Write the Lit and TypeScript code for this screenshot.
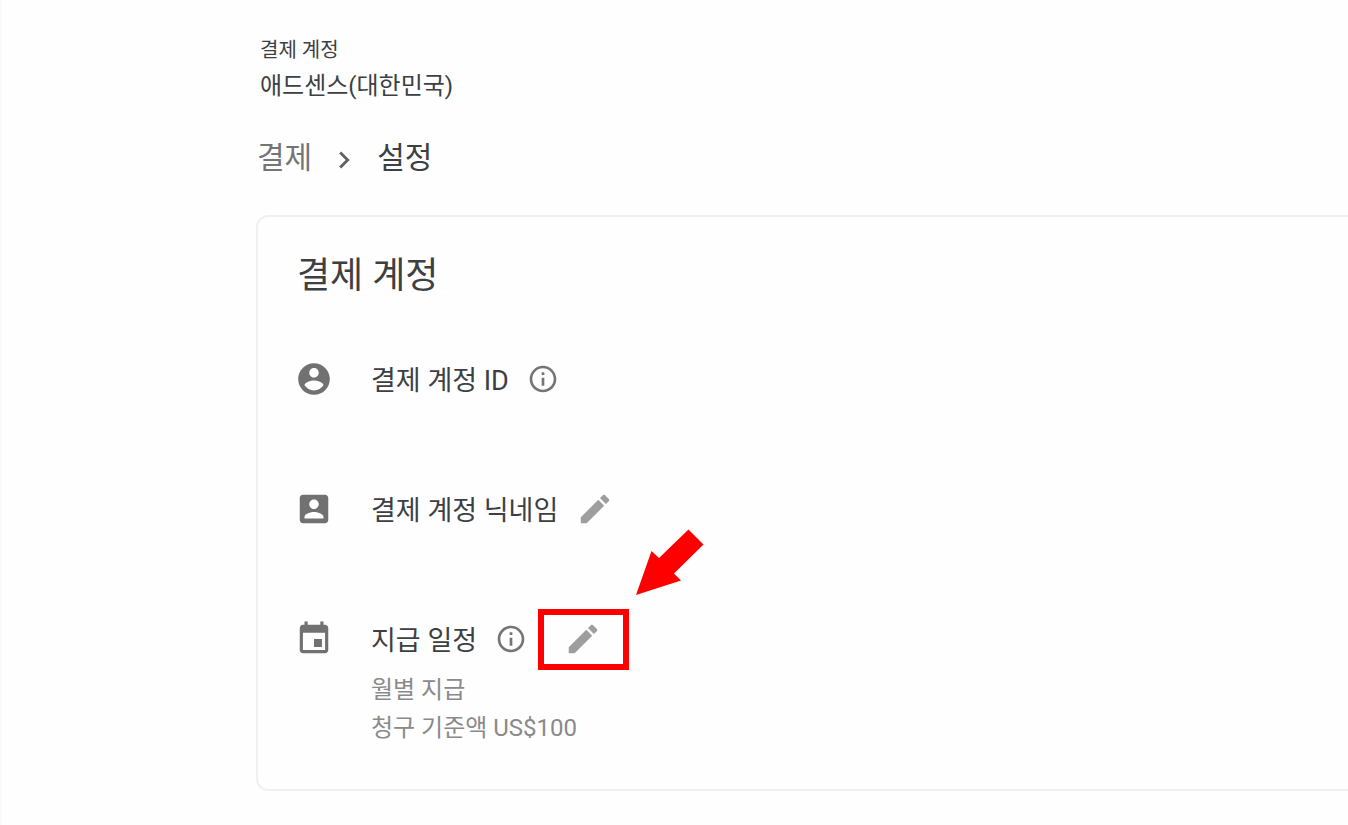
import { LitElement, html, css, svg } from "lit";
import { customElement } from "lit/decorators.js";

const PATHS = {
  accountCircle:
    "M12 2C6.48 2 2 6.48 2 12s4.48 10 10 10 10-4.48 10-10S17.52 2 12 2zm0 3c1.66 0 3 1.34 3 3s-1.34 3-3 3-3-1.34-3-3 1.34-3 3-3zm0 14.2c-2.5 0-4.71-1.28-6-3.22.03-1.99 4-3.08 6-3.08 1.99 0 5.97 1.09 6 3.08-1.29 1.94-3.5 3.22-6 3.22z",
  accountBox:
    "M3 5v14c0 1.1.89 2 2 2h14c1.1 0 2-.9 2-2V5c0-1.1-.9-2-2-2H5c-1.11 0-2 .9-2 2zm12 4c0 1.66-1.34 3-3 3s-3-1.34-3-3 1.34-3 3-3 3 1.34 3 3zm-9 8c0-2 4-3.1 6-3.1s6 1.1 6 3.1v1H6v-1z",
  event:
    "M17 12h-5v5h5v-5zM16 1v2H8V1H6v2H5c-1.11 0-1.99.9-1.99 2L3 19c0 1.1.89 2 2 2h14c1.1 0 2-.9 2-2V5c0-1.1-.9-2-2-2h-1V1h-2zm3 18H5V8h14v11z",
  info:
    "M11 7h2v2h-2zm0 4h2v6h-2zm1-9C6.48 2 2 6.48 2 12s4.48 10 10 10 10-4.48 10-10S17.52 2 12 2zm0 18c-4.41 0-8-3.59-8-8s3.59-8 8-8 8 3.59 8 8-3.59 8-8 8z",
  edit:
    "M3 17.25V21h3.75L17.81 9.94l-3.75-3.75L3 17.25zM20.71 7.04c.39-.39.39-1.02 0-1.41l-2.34-2.34c-.39-.39-1.02-.39-1.41 0l-1.83 1.83 3.75 3.75 1.83-1.83z",
  chevron: "M10 6L8.59 7.41 13.17 12l-4.58 4.59L10 18l6-6z",
};

const icon = (name: keyof typeof PATHS, cls: string) => html`
  <svg class=${cls} viewBox="0 0 24 24" aria-hidden="true">${svg`<path d=${PATHS[name]} />`}</svg>
`;

@customElement("app-root")
export class AppRoot extends LitElement {
  static styles = css`
    :host {
      display: block;
      box-sizing: border-box;
      min-height: 100vh;
      padding: 36px 0 32px 254px;
      border-left: 2px solid #fafafa;
      background: #fefefe;
      color: #3c4043;
      font-family: Roboto, "Noto Sans CJK KR", sans-serif;
    }
    * {
      box-sizing: border-box;
    }
    h2,
    h3,
    p,
    ol,
    ul {
      margin: 0;
      padding: 0;
      font-weight: 400;
      list-style: none;
    }
    svg {
      display: block;
      flex: none;
      fill: currentColor;
    }
    header {
      padding-left: 4px;
    }
    .account-label {
      font-size: 20px;
      line-height: 28px;
    }
    .account-name {
      font-size: 24px;
      line-height: 44px;
    }
    .crumbs {
      display: flex;
      gap: 16px;
      margin-top: 28px;
      padding-left: 1px;
      font-size: 30px;
      line-height: 44px;
    }
    .crumbs li {
      display: flex;
      align-items: center;
      gap: 15px;
    }
    .crumbs a {
      color: #757575;
      text-decoration: none;
    }
    .chevron {
      width: 34px;
      height: 34px;
      margin-top: 4px;
      color: #616161;
    }
    .card {
      margin-top: 35px;
      padding: 34px 39px 42px;
      border: 2px solid #eff0f0;
      border-right: 0;
      border-radius: 12px 0 0 12px;
    }
    .card-title {
      font-size: 36px;
      line-height: 50px;
    }
    .rows {
      display: grid;
      gap: 82px;
      margin-top: 54px;
    }
    .row {
      display: grid;
      grid-template-columns: 36px 1fr;
      column-gap: 38px;
    }
    .lead {
      width: 38px;
      height: 38px;
      margin: 5px 0 0 -2px;
      color: #717171;
    }
    .head {
      display: flex;
      align-items: center;
      height: 48px;
      gap: 18px;
    }
    .row-title {
      padding-top: 3px;
      font-size: 27px;
      line-height: 48px;
    }
    button {
      display: block;
      padding: 0;
      border: 0;
      background: none;
      cursor: pointer;
    }
    .info {
      width: 32px;
      height: 32px;
      color: #757575;
    }
    .edit {
      width: 38px;
      height: 38px;
      color: #9e9e9e;
    }
    .marked {
      position: relative;
      margin-left: 19px;
    }
    .frame {
      position: absolute;
      left: -26px;
      top: -11px;
      width: 91px;
      height: 61px;
      border: 6px solid #f00;
      pointer-events: none;
    }
    .arrow {
      position: absolute;
      left: 72px;
      top: -91px;
      width: 68px;
      height: 67px;
      color: #f00;
      pointer-events: none;
    }
    .details {
      color: #8a8a8a;
      font-size: 24px;
      line-height: 38px;
      padding-top: 8px;
    }
  `;

  render() {
    return html`
      <header>
        <p class="account-label">결제 계정</p>
        <p class="account-name">애드센스(대한민국)</p>
      </header>
      <nav aria-label="탐색경로">
        <ol class="crumbs">
          <li><a href="#payments">결제</a>${icon("chevron", "chevron")}</li>
          <li aria-current="page">설정</li>
        </ol>
      </nav>
      <main class="card">
        <h2 class="card-title">결제 계정</h2>
        <ul class="rows">
          <li class="row">
            ${icon("accountCircle", "lead")}
            <div class="head">
              <h3 class="row-title">결제 계정 ID</h3>
              <button type="button" aria-label="정보">${icon("info", "info")}</button>
            </div>
          </li>
          <li class="row">
            ${icon("accountBox", "lead")}
            <div class="head">
              <h3 class="row-title">결제 계정 닉네임</h3>
              <button type="button" aria-label="수정">${icon("edit", "edit")}</button>
            </div>
          </li>
          <li class="row">
            ${icon("event", "lead")}
            <div>
              <div class="head">
                <h3 class="row-title">지급 일정</h3>
                <button type="button" aria-label="정보">${icon("info", "info")}</button>
                <div class="marked">
                  <button type="button" aria-label="수정">${icon("edit", "edit")}</button>
                  <span class="frame"></span>
                  <svg class="arrow" viewBox="0 0 68 67" aria-hidden="true">
                    <path d="M0 66L15.5 22L23 29L52.5 0.5L67.5 15.5L38 44.5L45 51.5Z" />
                  </svg>
                </div>
              </div>
              <div class="details">
                <p>월별 지급</p>
                <p>청구 기준액 US$100</p>
              </div>
            </div>
          </li>
        </ul>
      </main>
    `;
  }
}
